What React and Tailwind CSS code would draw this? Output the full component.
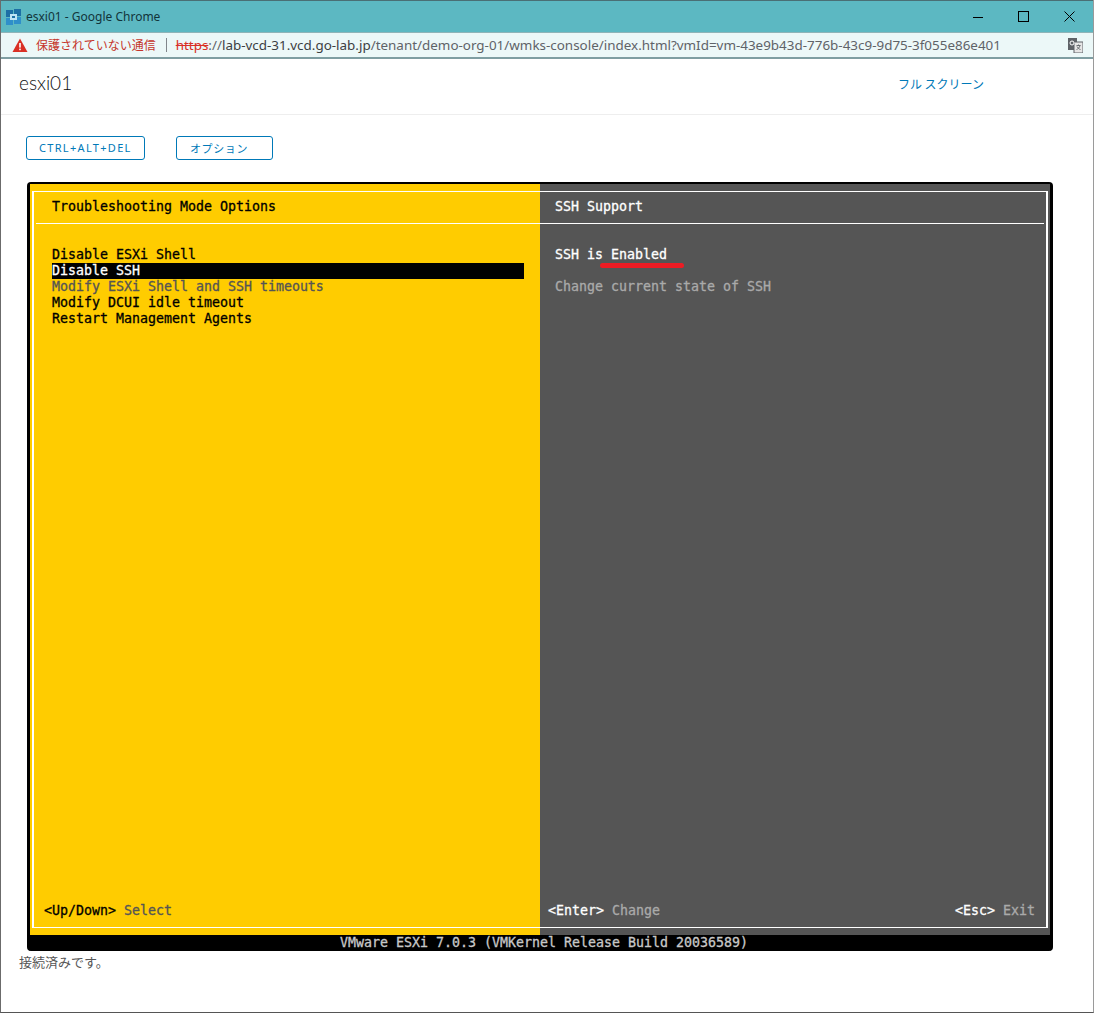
const mono = "font-['DejaVu_Sans_Mono',monospace] text-[13.29px] leading-[16px] font-normal [-webkit-text-stroke:0.3px] whitespace-pre";

function Favicon() {
  return (
    <svg width="16" height="16" viewBox="0 0 16 16" className="shrink-0">
      <rect x="0" y="1" width="7" height="7" fill="#1d6fa5" />
      <rect x="8" y="0" width="7" height="7" fill="#1d6fa5" />
      <rect x="0" y="9" width="7" height="7" fill="#2f8fca" />
      <rect x="8" y="8" width="7" height="7" fill="#2f8fca" />
      <rect x="4" y="5" width="7" height="6" fill="#bfe3f5" />
      <rect x="6" y="7" width="3" height="2" fill="#1d6fa5" />
    </svg>
  );
}

function WarningIcon() {
  return (
    <svg width="16" height="14" viewBox="0 0 16 14" className="shrink-0">
      <path d="M8 0.5 L15.5 14 H0.5 Z" fill="#d93025" />
      <rect x="7.2" y="5" width="1.6" height="4.6" fill="#fff" />
      <rect x="7.2" y="10.6" width="1.6" height="1.6" fill="#fff" />
    </svg>
  );
}

function TranslateIcon() {
  return (
    <svg width="15" height="15" viewBox="0 0 15 15" className="shrink-0">
      <rect x="0" y="0" width="9" height="12" fill="#5f6368" />
      <rect x="6" y="4" width="9" height="11" fill="#e6e6e6" stroke="#5f6368" strokeWidth="1" />
      <circle cx="4" cy="5" r="2" fill="none" stroke="#fff" strokeWidth="1" />
      <path d="M8.5 7.5h4M10.5 6.5v1M12 7.5c-.5 2-2 3.5-3.5 4M9 8.5c.7 1.5 2 2.6 3.5 3" fill="none" stroke="#5f6368" strokeWidth="0.9" />
    </svg>
  );
}

function WindowButtons() {
  return (
    <div className="flex items-center mr-[18px]">
      <svg width="10" height="10" viewBox="0 0 10 10"><path d="M0 5.5h10" stroke="#000" strokeWidth="1" /></svg>
      <svg width="11" height="11" viewBox="0 0 11 11" className="ml-[35px]"><rect x="0.5" y="0.5" width="10" height="10" fill="none" stroke="#000" strokeWidth="1" /></svg>
      <svg width="11" height="11" viewBox="0 0 11 11" className="ml-[35px]"><path d="M0.5 0.5l10 10M10.5 0.5l-10 10" stroke="#000" strokeWidth="1" /></svg>
    </div>
  );
}

function Row({ children, className = "" }) {
  return <div className={`${mono} h-[16px] ${className}`}>{children}</div>;
}

export default function App() {
  return (
    <div className="w-[1094px] h-[1013px] bg-white flex flex-col overflow-hidden relative border-l border-r border-b border-l-[#6b6b6b] border-r-[#9a9a9a] border-b-[#555] font-['Noto_Sans','Noto_Sans_CJK_JP',sans-serif]">
      <div className="h-[32px] bg-[#5cb8c2] border-t border-t-[#4a6f75] flex items-center justify-between shrink-0 pl-[5px]">
        <div className="flex items-center gap-[4px]">
          <Favicon />
          <span className="text-[12px] text-[#12343a]">esxi01 - Google Chrome</span>
        </div>
        <WindowButtons />
      </div>

      <div className="h-[27px] bg-[#ecf8f8] border-t border-t-[#8fb4b8] border-b-2 border-b-[#7f9ea2] flex items-center justify-between shrink-0 pl-[11px] pr-[10px]">
        <div className="flex items-center">
          <WarningIcon />
          <span className="ml-[8px] text-[12px] text-[#c5352b] font-['Noto_Sans_CJK_JP',sans-serif]">保護されていない通信</span>
          <span className="ml-[10px] w-px h-[14px] bg-[#80868b]" />
          <span className="ml-[9px] text-[13.43px] text-[#5f6368] whitespace-nowrap">
            <span className="text-[#d93025] line-through">https</span>://<span className="text-[#3c4043]">lab-vcd-31.vcd.go-lab.jp</span>/tenant/demo-org-01/wmks-console/index.html?vmId=vm-43e9b43d-776b-43c9-9d75-3f055e86e401
          </span>
        </div>
        <TranslateIcon />
      </div>

      <div className="h-[56px] border-b border-b-[#eeeeee] flex items-center justify-between shrink-0 pl-[18px] pr-[109px] pb-[6px]">
        <span className="text-[19px] font-light text-[#111] font-['Lato',sans-serif]">esxi01</span>
        <span className="text-[12px] text-[#0079b8] font-['Noto_Sans_CJK_JP',sans-serif]">フル スクリーン</span>
      </div>

      <div className="flex shrink-0 ml-[25px] mt-[21px] gap-[31px]">
        <button className="w-[119px] h-[24px] border border-[#0079b8] rounded-[3px] text-[11px] tracking-[0.12em] text-[#0079b8] text-left pl-[12px]">CTRL+ALT+DEL</button>
        <button className="w-[97px] h-[24px] border border-[#0079b8] rounded-[3px] text-[11px] tracking-[0.6px] text-[#0079b8] text-left pl-[13px] font-['Noto_Sans_CJK_JP',sans-serif]">オプション</button>
      </div>

      <div className="ml-[26px] mt-[22px] w-[1026px] h-[769px] shrink-0 flex flex-col bg-black rounded-[4px] border-t-2 border-l-[3px] border-r-[3px] border-black relative">
        <div className="flex h-[751px] shrink-0">
          <div className="w-[510px] bg-[#ffcc00] pt-[7px] pb-[7px] pl-[2px] flex">
            <div className="flex-1 border-l-2 border-t border-b border-white flex flex-col">
              <Row className="mt-[7px] ml-[18px] text-black">Troubleshooting Mode Options</Row>
              <div className="mt-[8px] ml-[2px] h-px bg-white" />
              <div className="mt-[23px] ml-[18px] w-[472px] flex flex-col flex-1">
                <Row className="text-black">Disable ESXi Shell</Row>
                <Row className="bg-black text-white">Disable SSH</Row>
                <Row className="text-[#555555]">Modify ESXi Shell and SSH timeouts</Row>
                <Row className="text-black">Modify DCUI idle timeout</Row>
                <Row className="text-black">Restart Management Agents</Row>
              </div>
              <Row className="ml-[10px] mb-[8px] text-black">{"<Up/Down> "}<span className="text-[#555555]">Select</span></Row>
            </div>
          </div>

          <div className="w-[510px] bg-[#555555] pt-[7px] pb-[7px] pr-[2px] flex">
            <div className="flex-1 border-r-2 border-t border-b border-white flex flex-col">
              <Row className="mt-[7px] ml-[15px] text-white">SSH Support</Row>
              <div className="mt-[8px] mr-[2px] h-px bg-white" />
              <div className="mt-[23px] ml-[15px] flex flex-col flex-1">
                <Row className="text-white">SSH is Enabled</Row>
                <Row> </Row>
                <Row className="text-[#aaaaaa]">Change current state of SSH</Row>
              </div>
              <div className="flex justify-between ml-[8px] mr-[11px] mb-[8px]">
                <Row className="text-white">{"<Enter> "}<span className="text-[#aaaaaa]">Change</span></Row>
                <Row className="text-white">{"<Esc> "}<span className="text-[#aaaaaa]">Exit</span></Row>
              </div>
            </div>
          </div>
        </div>
        <Row className="text-[#c8c8c8] text-center pl-[8px]">VMware ESXi 7.0.3 (VMKernel Release Build 20036589)</Row>
        <div className="absolute left-[570px] top-[79px] w-[84px] h-[5px] rounded-full bg-[#ed1c24]" />
      </div>

      <div className="ml-[18px] mt-[2px] text-[13px] leading-[18px] text-[#565656] font-['Noto_Sans_CJK_JP',sans-serif]">接続済みです。</div>
    </div>
  );
}
